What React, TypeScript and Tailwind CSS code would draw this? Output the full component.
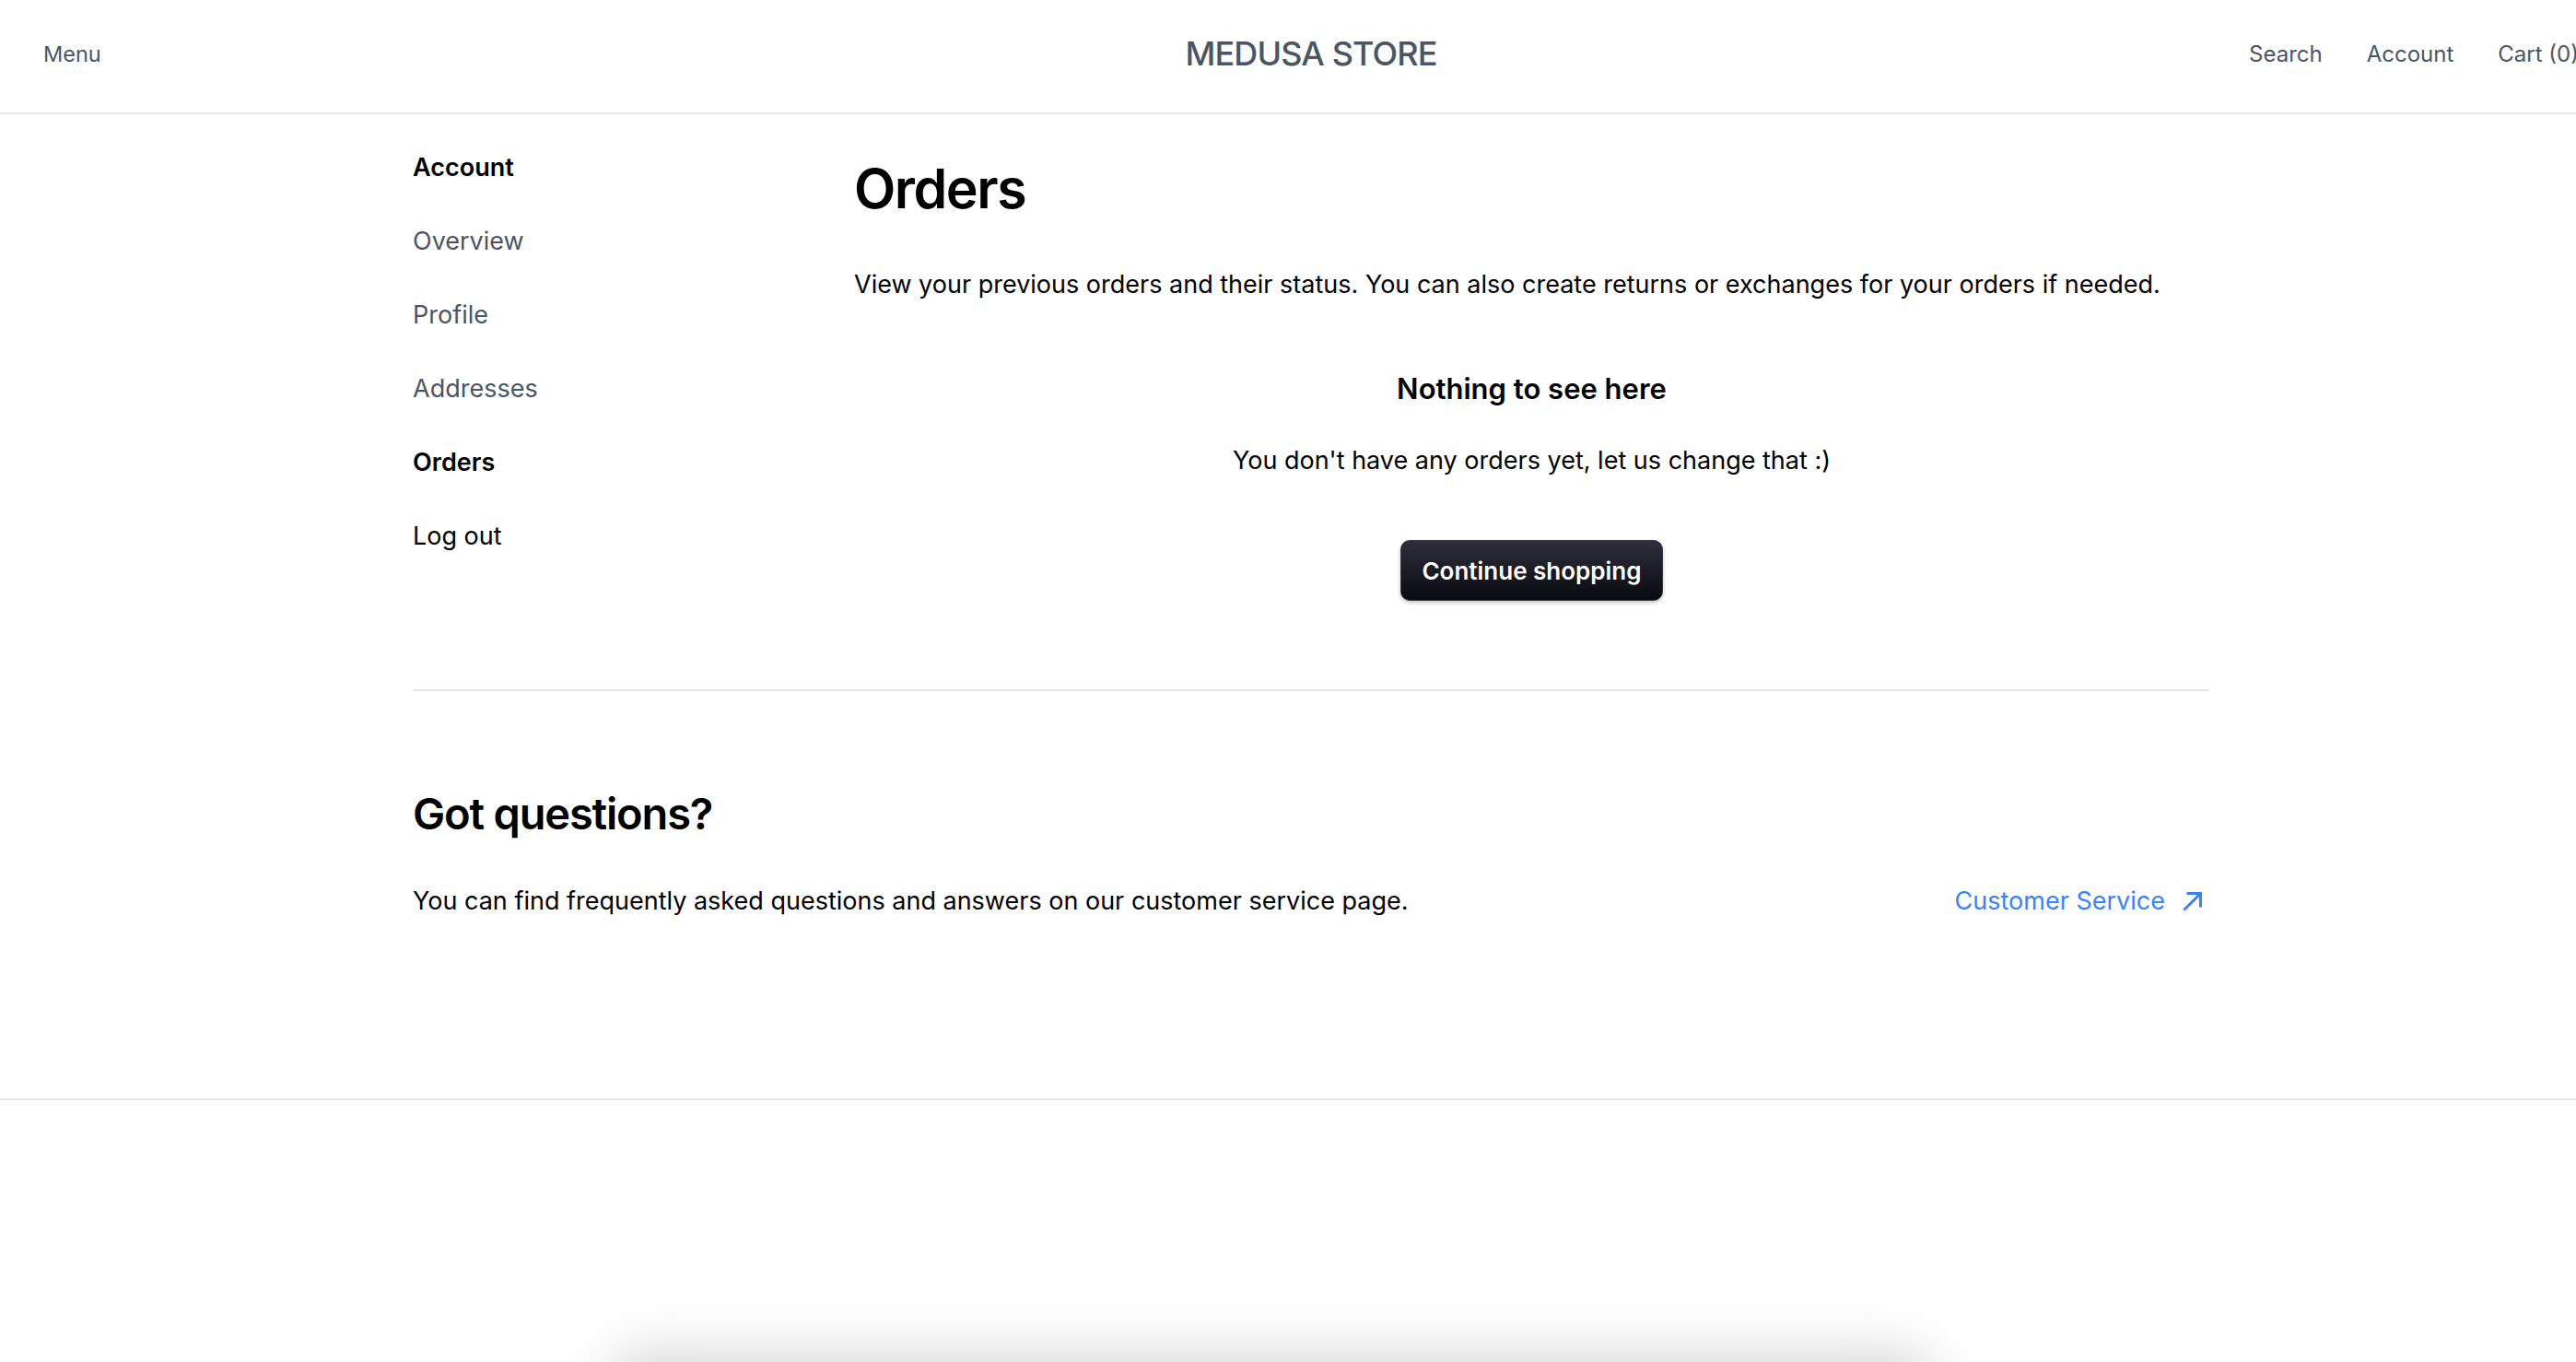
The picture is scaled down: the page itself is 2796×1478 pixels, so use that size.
const NAV_ITEMS: { label: string; tone: 'muted' | 'active' | 'plain' }[] = [
  { label: 'Overview', tone: 'muted' },
  { label: 'Profile', tone: 'muted' },
  { label: 'Addresses', tone: 'muted' },
  { label: 'Orders', tone: 'active' },
  { label: 'Log out', tone: 'plain' },
];

function Header() {
  return (
    <header className="h-[124px] pb-[4px] border-b-2 border-[#e5e7eb] bg-white flex items-center justify-between px-[47px] text-[#4b5563]">
      <div className="flex-1 flex items-center text-[23.5px]">Menu</div>
      <div className="text-[36px] leading-[40px] font-medium tracking-tight uppercase -mt-[2px]">Medusa Store</div>
      <div className="flex-1 flex items-center justify-end gap-[48px] text-[24px]">
        <span>Search</span>
        <span>Account</span>
        <span>Cart (0)</span>
      </div>
    </header>
  );
}

function Sidebar() {
  return (
    <aside className="w-[479px] shrink-0 pt-[38px] flex flex-col gap-[40px]">
      <div className="h-[40px] leading-[40px] text-[27px] font-semibold text-black">Account</div>
      {NAV_ITEMS.map((item) => (
        <div
          key={item.label}
          className={`h-[40px] leading-[40px] text-[27px] ${
            item.tone === 'muted' ? 'text-[#4b5563]' : item.tone === 'active' ? 'text-black font-semibold' : 'text-black'
          }`}
        >
          {item.label}
        </div>
      ))}
    </aside>
  );
}

function ArrowIcon() {
  return (
    <svg width="24" height="24" viewBox="0 0 24 24" fill="none" stroke="currentColor" strokeWidth="3" strokeLinecap="square">
      <path d="M3.5 20.5 L20 4" />
      <path d="M7 3.5 H20.5 V17" />
    </svg>
  );
}

function OrdersPanel() {
  return (
    <section className="flex-1 pt-[49px] flex flex-col">
      <h1 className="text-[59px] leading-[64px] font-semibold text-black tracking-tight">Orders</h1>
      <p className="mt-[54px] text-[27px] leading-[36px] text-black">
        View your previous orders and their status. You can also create returns or exchanges for your orders if needed.
      </p>
      <div className="flex flex-col items-center">
        <h2 className="mt-[75px] text-[31px] leading-[40px] font-semibold text-black">Nothing to see here</h2>
        <p className="mt-[40px] text-[27px] leading-[36px] text-black">You don't have any orders yet, let us change that :)</p>
        <button className="mt-[68px] h-[66px] w-[285px] rounded-[10px] border border-[#3a3b46] bg-gradient-to-b from-[#2e2f3b] to-[#090a11] text-white text-[26px] font-semibold shadow-[0_2px_4px_rgba(0,0,0,0.25)]">
          Continue shopping
        </button>
      </div>
    </section>
  );
}

export default function App() {
  return (
    <div className="w-[2796px] h-[1478px] overflow-hidden bg-white relative" style={{ fontFamily: 'Inter, "Noto Sans", sans-serif' }}>
      <div className="w-[2846px]">
        <Header />
        <main className="w-[1950px] mx-auto">
          <div className="flex items-start">
            <Sidebar />
            <OrdersPanel />
          </div>
          <div className="mt-[96px] border-t-2 border-[#e5e7eb]" />
          <div className="pt-[105px] pb-[193px]">
            <h2 className="text-[47px] leading-[56px] font-semibold text-black tracking-tight">Got questions?</h2>
            <div className="mt-[47px] flex items-center justify-between">
              <p className="text-[27px] leading-[36px] text-black">
                You can find frequently asked questions and answers on our customer service page.
              </p>
              <a className="flex items-center gap-[18px] text-[27px] text-[#3b82f6] pr-[6px]">
                Customer Service
                <ArrowIcon />
              </a>
            </div>
          </div>
        </main>
        <div className="border-t-2 border-[#e5e7eb]" />
      </div>
      <div className="absolute left-[660px] top-[1470px] w-[1440px] h-[90px] rounded-[40px] bg-[#d4d4d4] blur-[30px]" />
    </div>
  );
}
